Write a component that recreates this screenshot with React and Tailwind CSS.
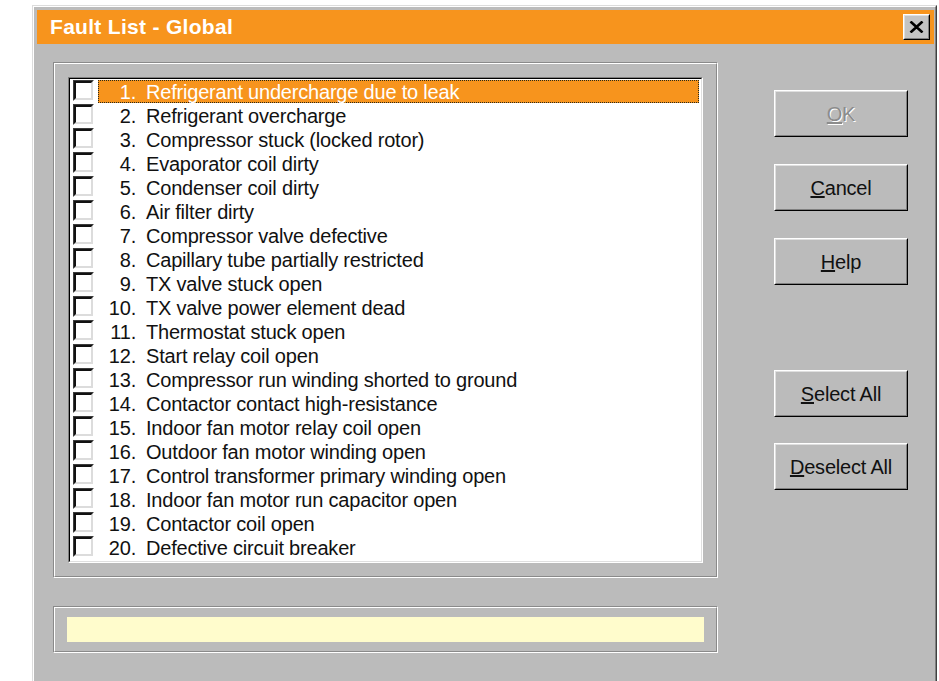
import React from 'react';

const faults = [
  'Refrigerant undercharge due to leak',
  'Refrigerant overcharge',
  'Compressor stuck (locked rotor)',
  'Evaporator coil dirty',
  'Condenser coil dirty',
  'Air filter dirty',
  'Compressor valve defective',
  'Capillary tube partially restricted',
  'TX valve stuck open',
  'TX valve power element dead',
  'Thermostat stuck open',
  'Start relay coil open',
  'Compressor run winding shorted to ground',
  'Contactor contact high-resistance',
  'Indoor fan motor relay coil open',
  'Outdoor fan motor winding open',
  'Control transformer primary winding open',
  'Indoor fan motor run capacitor open',
  'Contactor coil open',
  'Defective circuit breaker',
];

// etched group frame (dark line then light line)
const Etched = ({ className = '', children }) => (
  <div className="border border-t-[#8a8a8a] border-l-[#8a8a8a] border-b-white border-r-white">
    <div className={`border border-t-white border-l-white border-b-[#8a8a8a] border-r-[#8a8a8a] ${className}`}>
      {children}
    </div>
  </div>
);

const CheckBox = () => (
  <div className="w-[21px] h-[21px] shrink-0 border border-t-[#3c3c3c] border-l-[#3c3c3c] border-b-white border-r-white">
    <div className="h-full w-full bg-white border-2 border-t-[#111] border-l-[#111] border-b-[#dcdcdc] border-r-[#dcdcdc]" />
  </div>
);

const Button = ({ children, disabled, className = '' }) => (
  <div className={`w-[134px] h-[47px] border border-t-white border-l-white border-b-black border-r-black ${className}`}>
    <div className="h-full w-full flex items-center justify-center border border-t-[#dfdfdf] border-l-[#dfdfdf] border-b-[#808080] border-r-[#808080]">
      <span
        className={
          disabled
            ? 'text-[20px] tracking-[-0.2px] text-[#8c8c8c] [text-shadow:1px_1px_0_#ffffff]'
            : 'text-[20px] tracking-[-0.2px] text-[#111]'
        }
      >
        {children}
      </span>
    </div>
  </div>
);

export default function App() {
  return (
    <div className="h-[681px] w-[939px] overflow-hidden bg-white pl-[32px] pt-[5px] font-['Liberation_Sans',Arial,sans-serif]">
      <div className="w-[905px] h-[700px] bg-[#bbbbbb] border-l border-t border-r border-l-[#dcdcdc] border-t-[#dcdcdc] border-r-[#404040]">
        <div className="h-full border-l border-t border-r border-l-white border-t-white border-r-[#808080] pl-[3px] pr-[1px] pt-[3px]">
          {/* title bar */}
          <div className="h-[34px] bg-[#f7941d] flex justify-between items-start">
            <span className="pl-[13px] pt-[5px] text-[21px] leading-[24px] tracking-[0.3px] font-bold text-white">
              Fault List - Global
            </span>
            <div className="mt-[4px] mr-[4px] w-[27px] h-[26px] border border-t-white border-l-white border-b-black border-r-black">
              <div className="h-full w-full bg-[#c4c4c4] flex items-center justify-center border border-t-[#dfdfdf] border-l-[#dfdfdf] border-b-[#808080] border-r-[#808080]">
                <svg width="15" height="12" viewBox="0 0 15 12">
                  <path d="M1.5 0.5 L13.5 11.5 M13.5 0.5 L1.5 11.5" stroke="#000" strokeWidth="2.6" />
                </svg>
              </div>
            </div>
          </div>

          {/* client area */}
          <div className="flex">
            <div className="pl-[16px] pt-[18px]">
              <div className="w-[665px]">
                <Etched className="p-[13px]">
                  {/* list box */}
                  <div className="border border-t-[#808080] border-l-[#808080] border-b-white border-r-white">
                    <div className="bg-white py-[1px] pl-[3px] pr-[2px] border border-t-black border-l-black border-b-[#dfdfdf] border-r-[#dfdfdf]">
                      {faults.map((f, i) => {
                        const active = i === 0;
                        return (
                          <div key={i} className="h-[24px] flex items-start">
                            <CheckBox />
                            <div
                              className={
                                active
                                  ? 'ml-[4px] flex-1 h-[23px] flex border border-dotted border-[#2a2a1a] bg-[#f7941d] text-white text-[20px] leading-[22px] tracking-[-0.2px]'
                                  : 'ml-[4px] flex-1 h-[23px] flex border border-transparent text-[#111] text-[20px] leading-[22px] tracking-[-0.2px]'
                              }
                            >
                              <span className="w-[37px] text-right">{i + 1}.</span>
                              <span className="ml-[10px] whitespace-nowrap">{f}</span>
                            </div>
                          </div>
                        );
                      })}
                    </div>
                  </div>
                </Etched>
              </div>

              {/* status line */}
              <div className="mt-[28px] w-[665px]">
                <Etched className="px-[12px] py-[9px]">
                  <div className="h-[25px] bg-[#fffccc]" />
                </Etched>
              </div>
            </div>

            {/* buttons */}
            <div className="ml-[56px] pt-[46px] flex flex-col">
              <Button disabled>
                <span className="underline">O</span>K
              </Button>
              <Button className="mt-[27px]">
                <span className="underline">C</span>ancel
              </Button>
              <Button className="mt-[27px]">
                <span className="underline">H</span>elp
              </Button>
              <Button className="mt-[85px]">
                <span className="underline">S</span>elect All
              </Button>
              <Button className="mt-[26px]">
                <span className="underline">D</span>eselect All
              </Button>
            </div>
          </div>
        </div>
      </div>
    </div>
  );
}
